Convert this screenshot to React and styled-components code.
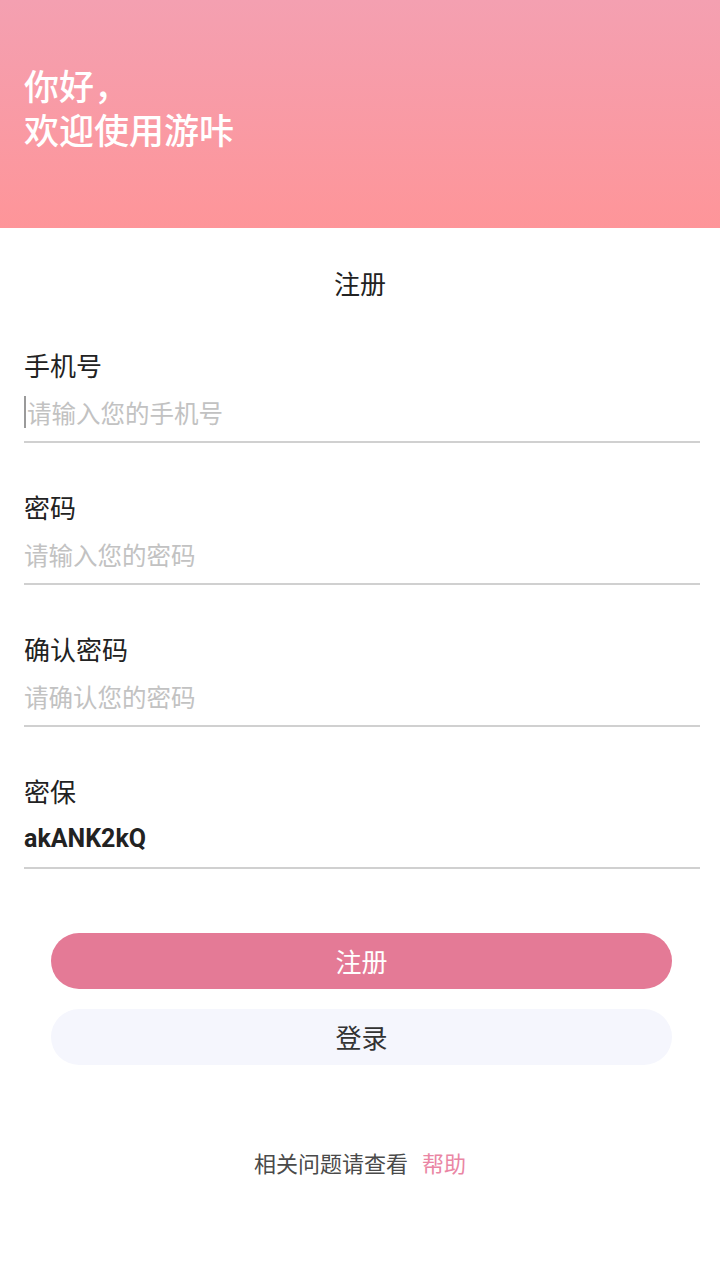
import React from "react";
import styled, { createGlobalStyle } from "styled-components";

const Global = createGlobalStyle`
  html, body { margin: 0; padding: 0; background: #ffffff; }
  body { font-family: Roboto, "Noto Sans CJK SC", sans-serif; }
  * { box-sizing: border-box; }
`;

const Page = styled.div`
  width: 720px;
  min-height: 1280px;
  background: #ffffff;
  display: flex;
  flex-direction: column;
`;

const Header = styled.header`
  height: 228px;
  padding: 63px 24px 0;
  background: linear-gradient(180deg, #f4a0b1 0%, #fe9599 100%);
  color: #ffffff;
  font-family: "Noto Sans CJK SC", sans-serif;
  font-size: 35px;
  line-height: 44px;
  font-weight: 500;
`;

const Title = styled.h1`
  margin: 37px 0 0;
  text-align: center;
  font-family: "Noto Sans CJK SC", sans-serif;
  font-weight: 400;
  font-size: 26px;
  line-height: 36px;
  color: #222222;
`;

const Form = styled.div`
  display: flex;
  flex-direction: column;
  padding: 0 20px 0 24px;
`;

const Field = styled.label`
  display: flex;
  flex-direction: column;
  padding: 46px 0 5px;
  border-bottom: 2px solid #d0d0d0;
`;

const Label = styled.span`
  font-family: "Noto Sans CJK SC", sans-serif;
  font-size: 26px;
  line-height: 36px;
  color: #222222;
`;

const InputWrap = styled.div`
  position: relative;
  margin-top: 5px;
  height: 48px;
`;

const Input = styled.input`
  width: 100%;
  height: 48px;
  border: none;
  outline: none;
  padding: 0 0 0 ${(p) => (p.$indent ? "3px" : "0")};
  background: transparent;
  font-family: ${(p) => (p.$bold ? "Roboto, \"Noto Sans CJK SC\"" : "\"Noto Sans CJK SC\"")}, sans-serif;
  font-size: ${(p) => (p.$bold ? "25px" : "24.5px")};
  font-weight: ${(p) => (p.$bold ? 700 : 400)};
  color: #222222;
  caret-color: transparent;
  &::placeholder {
    color: #c2c2c2;
  }
`;

const Caret = styled.span`
  position: absolute;
  left: 0;
  top: 8px;
  width: 2px;
  height: 32px;
  background: #9a9a9a;
`;

const Buttons = styled.div`
  display: flex;
  flex-direction: column;
  gap: 20px;
  margin-top: 64px;
  padding: 0 48px 0 51px;
`;

const Button = styled.button`
  height: 56px;
  border: none;
  border-radius: 28px;
  background: ${(p) => (p.$primary ? "#e47a96" : "#f5f6fd")};
  color: ${(p) => (p.$primary ? "#ffffff" : "#333333")};
  font-family: "Noto Sans CJK SC", sans-serif;
  font-size: 26px;
  line-height: 56px;
  padding: 0;
  cursor: pointer;
`;

const Footer = styled.p`
  margin: 82px 0 0;
  text-align: center;
  font-family: "Noto Sans CJK SC", sans-serif;
  font-size: 22px;
  line-height: 30px;
  color: #4a4a4a;
`;

const HelpLink = styled.a`
  margin-left: 14px;
  color: #ea86a4;
  text-decoration: none;
`;

const fields = [
  { label: "手机号", placeholder: "请输入您的手机号", caret: true },
  { label: "密码", placeholder: "请输入您的密码", type: "password" },
  { label: "确认密码", placeholder: "请确认您的密码", type: "password" },
  { label: "密保", value: "akANK2kQ" },
];

export default function App() {
  return (
    <Page>
      <Global />
      <Header>
        <div>你好，</div>
        <div>欢迎使用游咔</div>
      </Header>
      <Title>注册</Title>
      <Form>
        {fields.map((f) => (
          <Field key={f.label}>
            <Label>{f.label}</Label>
            <InputWrap>
              <Input
                type={f.type || "text"}
                placeholder={f.placeholder}
                defaultValue={f.value}
                $bold={!!f.value}
                $indent={f.caret}
              />
              {f.caret && <Caret />}
            </InputWrap>
          </Field>
        ))}
      </Form>
      <Buttons>
        <Button $primary>注册</Button>
        <Button>登录</Button>
      </Buttons>
      <Footer>
        相关问题请查看<HelpLink href="#">帮助</HelpLink>
      </Footer>
    </Page>
  );
}
